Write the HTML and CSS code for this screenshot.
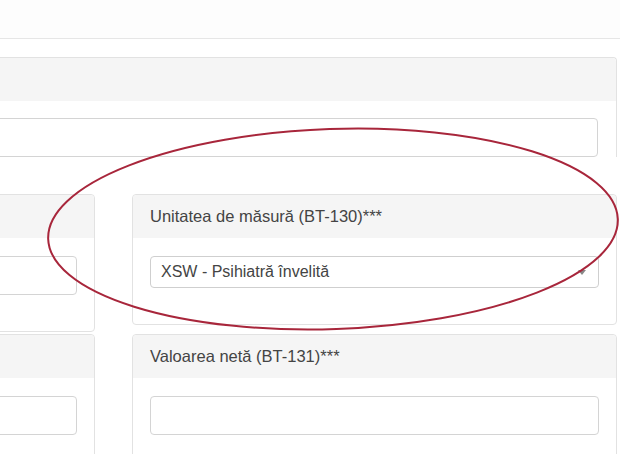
FILE: index.html
```html
<!DOCTYPE html>
<html lang="ro">
<head>
  <meta charset="UTF-8" />
  <meta name="viewport" content="width=device-width, initial-scale=1.0" />
  <title>Factură - linie</title>
  <link rel="stylesheet" href="styles.css">
</head>
<body>
  <div class="topbar"></div>

  <div class="page">
    <div class="panel panel-wide">
      <div class="panel-heading"></div>
      <div class="panel-body">
        <input type="text" class="form-control" />
      </div>
    </div>

    <div class="grid">
      <div class="panel">
        <div class="panel-heading"></div>
        <div class="panel-body">
          <input type="text" class="form-control" />
        </div>
      </div>

      <div class="panel">
        <div class="panel-heading">Unitatea de măsură (BT-130)***</div>
        <div class="panel-body">
          <div class="select">XSW - Psihiatră învelită</div>
        </div>
      </div>

      <div class="panel">
        <div class="panel-heading"></div>
        <div class="panel-body">
          <input type="text" class="form-control" />
        </div>
      </div>

      <div class="panel">
        <div class="panel-heading">Valoarea netă (BT-131)***</div>
        <div class="panel-body">
          <input type="text" class="form-control" />
        </div>
      </div>
    </div>
  </div>

  <!-- red marker drawn over the screenshot -->
  <svg class="marker" width="620" height="454" viewBox="0 0 620 454">
    <ellipse cx="333" cy="229" rx="285" ry="100" transform="rotate(-2 333 229)"
             fill="none" stroke="#a8263b" stroke-width="2" />
  </svg>
</body>
</html>
```

FILE: styles.css
```css
/* Base */
* { margin: 0; padding: 0; box-sizing: border-box; }
body {
  font-family: "Liberation Sans", Arial, sans-serif;
  color: #444;
  background: #fff;
  width: 620px;
  height: 454px;
  overflow: hidden;
  position: relative;
}

.topbar {
  height: 39px;
  border-bottom: 1px solid #e6e6e6;
  background: #fdfdfd;
}

/* Page, pushed left so the left column is cut off */
.page {
  width: 1007px;
  margin-left: -390px;
  padding-top: 18px;
}

/* Panels */
.panel {
  border: 1px solid #e2e2e2;
  border-radius: 4px;
  background: #fff;
}
.panel-heading {
  height: 43px;
  padding: 0 17px;
  background: #f5f5f5;
  font-size: 16.5px;
  line-height: 43px;
  border-radius: 4px 4px 0 0;
}
.panel-body {
  padding: 18px 17px 36px;
}

.panel-wide {
  border-bottom: none;
  border-radius: 4px 4px 0 0;
}
.panel-wide .panel-body {
  padding: 17px 18px 0;
}

.grid {
  display: grid;
  grid-template-columns: 485px 485px;
  column-gap: 37px;
  row-gap: 2px;
  align-items: start;
  margin-top: 37px;
}

/* Form controls */
.form-control {
  display: block;
  width: 100%;
  height: 39px;
  border: 1px solid #d4d4d4;
  border-radius: 4px;
  background: #fff;
  font: inherit;
}
.select {
  position: relative;
  height: 32px;
  padding: 0 10px;
  border: 1px solid #cfcfcf;
  border-radius: 4px;
  font-size: 16px;
  line-height: 30px;
  color: #444;
}
.select::after {
  content: "";
  position: absolute;
  right: 12px;
  top: 13px;
  border-left: 4px solid transparent;
  border-right: 4px solid transparent;
  border-top: 5px solid #888;
}

.marker {
  position: absolute;
  left: 0;
  top: 0;
  pointer-events: none;
}
```
